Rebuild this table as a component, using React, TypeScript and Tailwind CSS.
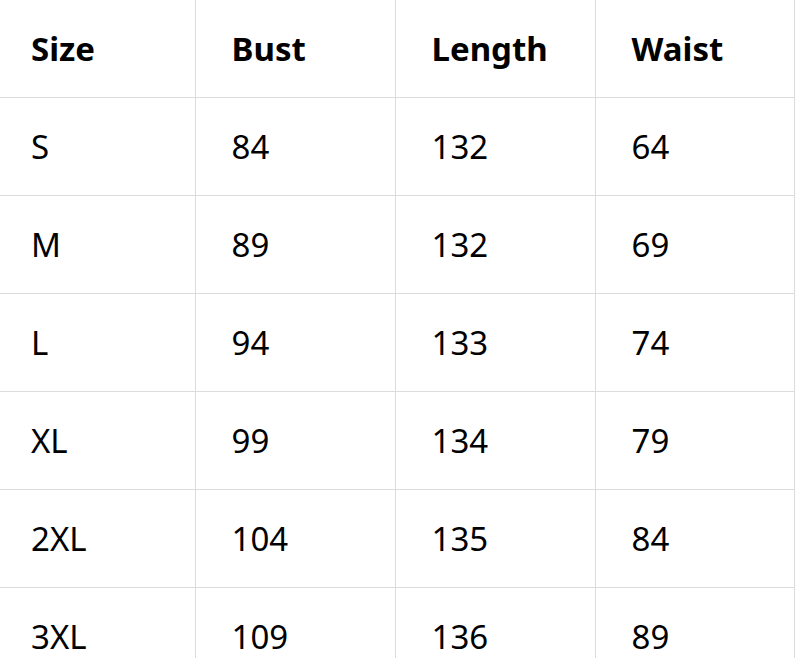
const HEAD = ["Size", "Bust", "Length", "Waist"];

const ROWS = [
  ["S", "84", "132", "64"],
  ["M", "89", "132", "69"],
  ["L", "94", "133", "74"],
  ["XL", "99", "134", "79"],
  ["2XL", "104", "135", "84"],
  ["3XL", "109", "136", "89"],
];

const cell = "h-[98px] border-b border-r border-[#dcdcdc] pl-[36px] align-middle";

export default function App() {
  return (
    <div className="h-[658px] w-[796px] overflow-hidden bg-white">
      <table
        className="-ml-[5px] -mt-px border-collapse text-[33px] text-black"
        style={{ fontFamily: '"Noto Sans", "Open Sans", sans-serif' }}
      >
        <colgroup>
          <col className="w-[200px]" />
          <col className="w-[200px]" />
          <col className="w-[200px]" />
          <col className="w-[199px]" />
        </colgroup>
        <thead>
          <tr className="border-t border-[#dcdcdc]">
            {HEAD.map((h) => (
              <th key={h} className={cell + " text-left font-bold"}>
                {h}
              </th>
            ))}
          </tr>
        </thead>
        <tbody>
          {ROWS.map((row) => (
            <tr key={row[0]}>
              {row.map((v, i) => (
                <td key={i} className={cell + " font-normal"}>
                  {v}
                </td>
              ))}
            </tr>
          ))}
        </tbody>
      </table>
    </div>
  );
}
